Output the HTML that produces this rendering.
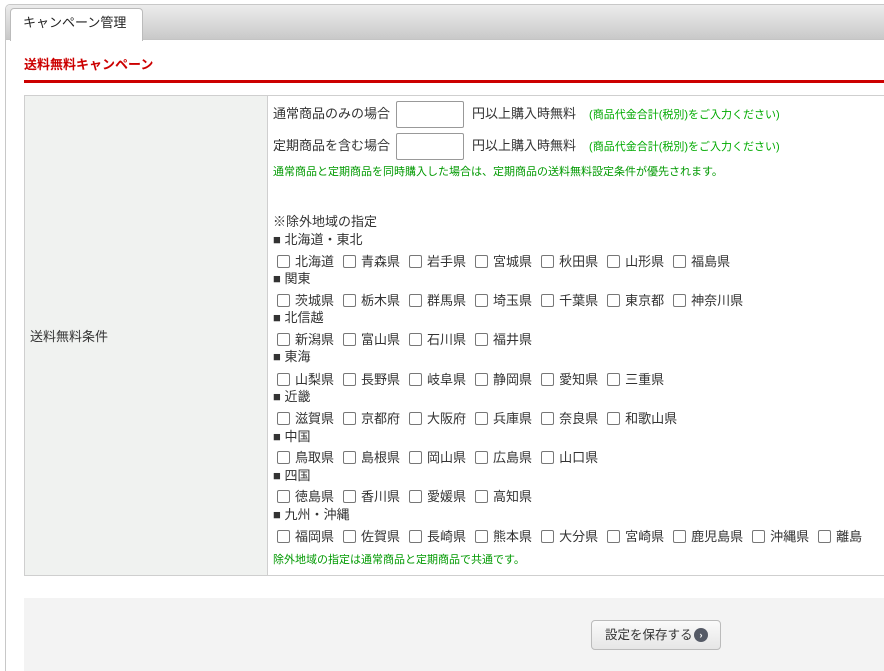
<!DOCTYPE html>
<html><head><meta charset="utf-8"><style>
*{box-sizing:border-box}
html,body{margin:0;width:884px;height:671px;overflow:hidden}
body{background:#fff;font-family:"Liberation Sans","Noto Sans CJK JP",sans-serif;font-size:13px;color:#333;position:relative}
.frame{position:absolute;left:5px;top:4px;width:879px;height:667px;border:1px solid #c8c8c8;border-right:none;border-bottom:none;border-radius:5px 0 0 0;background:#fff}
.bar{position:absolute;left:6px;top:5px;width:878px;height:35px;background:linear-gradient(#ececec,#c9c9c9);border-bottom:1px solid #c4c4c4;border-radius:4px 0 0 0}
.tab{position:absolute;left:10px;top:8px;width:133px;height:33px;background:#fff;border:1px solid #bbb;border-bottom:none;border-radius:4px 4px 0 0;font-size:13px;line-height:28px;padding-left:12px;color:#222}
.title{position:absolute;left:24px;top:56px;color:#c00;font-weight:bold;font-size:13px;line-height:18px}
.rline{position:absolute;left:24px;top:80px;width:860px;height:3px;background:#c00}
.tbl{position:absolute;left:24px;top:95px;width:870px;height:481px;border:1px solid #cfcfcf}
.lc{position:absolute;left:0;top:0;width:243px;height:479px;background:#f0f2f0;border-right:1px solid #cfcfcf}
.lc span{position:absolute;left:5px;top:230px}
.r{position:absolute;left:273px;white-space:nowrap;line-height:18px}
.inp{display:inline-block;width:68px;height:27px;border:1px solid #999;border-radius:2px;vertical-align:middle;margin:0 8px 0 6px}
.note{color:#0a0;font-size:11px}
.g{color:#090;font-size:11px}
.cb{position:absolute;left:277px;white-space:nowrap;line-height:18px}
.cb i{display:inline-block;width:13px;height:13px;border:1px solid #777;border-radius:2px;vertical-align:-2px;margin:0 5px 0 0}
.cb b{font-weight:normal;margin-right:9px}
.foot{position:absolute;left:24px;top:598px;width:860px;height:73px;background:#f3f3f3}
.btn{position:absolute;left:591px;top:620px;width:130px;height:30px;border:1px solid #bbb;border-radius:4px;background:linear-gradient(#fafafa,#e6e6e6);font-size:12.5px;line-height:28px;padding-left:13px;color:#333}
.btn em{position:absolute;left:102px;top:7px;width:14px;height:14px;border-radius:50%;background:#555a66;color:#fff;font-style:normal;font-size:9px;line-height:14px;text-align:center;font-weight:bold}
</style></head><body>
<div class="frame"></div>
<div class="bar"></div>
<div class="tab">キャンペーン管理</div>
<div class="title">送料無料キャンペーン</div>
<div class="rline"></div>
<div class="tbl"><div class="lc"><span>送料無料条件</span></div></div>
<div class="r" style="top:101px">通常商品のみの場合<span class="inp"></span>円以上購入時無料　<span class="note">(商品代金合計(税別)をご入力ください)</span></div>
<div class="r" style="top:133px">定期商品を含む場合<span class="inp"></span>円以上購入時無料　<span class="note">(商品代金合計(税別)をご入力ください)</span></div>
<div class="r g" style="top:163px">通常商品と定期商品を同時購入した場合は、定期商品の送料無料設定条件が優先されます。</div>
<div class="r" style="top:213px">※除外地域の指定</div>
<div class="r" style="top:231px">■ 北海道・東北</div>
<div class="cb" style="top:253px"><i></i><b>北海道</b><i></i><b>青森県</b><i></i><b>岩手県</b><i></i><b>宮城県</b><i></i><b>秋田県</b><i></i><b>山形県</b><i></i><b>福島県</b></div>
<div class="r" style="top:270px">■ 関東</div>
<div class="cb" style="top:292px"><i></i><b>茨城県</b><i></i><b>栃木県</b><i></i><b>群馬県</b><i></i><b>埼玉県</b><i></i><b>千葉県</b><i></i><b>東京都</b><i></i><b>神奈川県</b></div>
<div class="r" style="top:309px">■ 北信越</div>
<div class="cb" style="top:331px"><i></i><b>新潟県</b><i></i><b>富山県</b><i></i><b>石川県</b><i></i><b>福井県</b></div>
<div class="r" style="top:348px">■ 東海</div>
<div class="cb" style="top:371px"><i></i><b>山梨県</b><i></i><b>長野県</b><i></i><b>岐阜県</b><i></i><b>静岡県</b><i></i><b>愛知県</b><i></i><b>三重県</b></div>
<div class="r" style="top:388px">■ 近畿</div>
<div class="cb" style="top:410px"><i></i><b>滋賀県</b><i></i><b>京都府</b><i></i><b>大阪府</b><i></i><b>兵庫県</b><i></i><b>奈良県</b><i></i><b>和歌山県</b></div>
<div class="r" style="top:428px">■ 中国</div>
<div class="cb" style="top:449px"><i></i><b>鳥取県</b><i></i><b>島根県</b><i></i><b>岡山県</b><i></i><b>広島県</b><i></i><b>山口県</b></div>
<div class="r" style="top:467px">■ 四国</div>
<div class="cb" style="top:488px"><i></i><b>徳島県</b><i></i><b>香川県</b><i></i><b>愛媛県</b><i></i><b>高知県</b></div>
<div class="r" style="top:506px">■ 九州・沖縄</div>
<div class="cb" style="top:528px"><i></i><b>福岡県</b><i></i><b>佐賀県</b><i></i><b>長崎県</b><i></i><b>熊本県</b><i></i><b>大分県</b><i></i><b>宮崎県</b><i></i><b>鹿児島県</b><i></i><b>沖縄県</b><i></i><b>離島</b></div>
<div class="r g" style="top:551px">除外地域の指定は通常商品と定期商品で共通です。</div>
<div class="foot"></div>
<div class="btn">設定を保存する<em>›</em></div>
</body></html>
